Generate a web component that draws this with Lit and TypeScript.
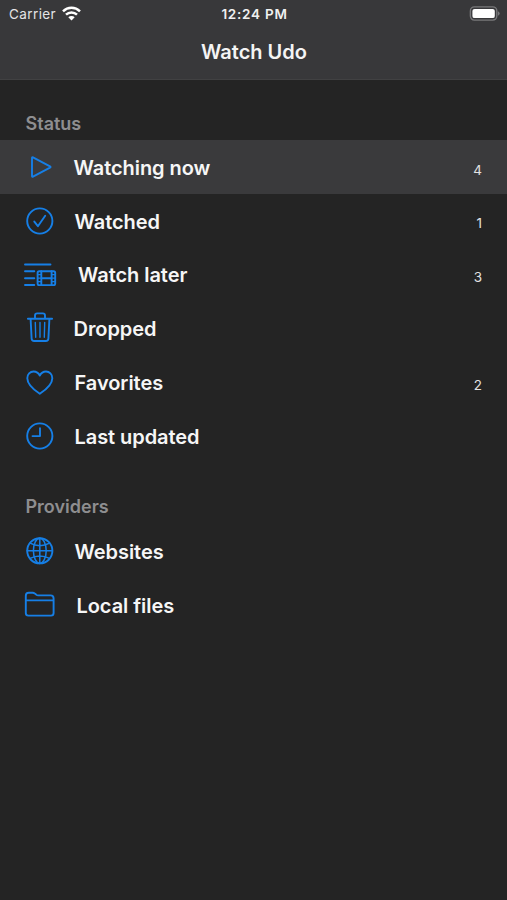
import { LitElement, html, svg, css, TemplateResult } from "lit";
import { customElement, property } from "lit/decorators.js";

const icons: Record<string, TemplateResult> = {
  play: svg`<path d="M10 8.9v18.2q0 1.1 1 .6L28 18.7q1.2-.7 0-1.4L11 8.3q-1-.5-1 .6z"/>`,
  check: svg`<circle cx="17.8" cy="18" r="12.6"/><path d="M12.3 18.6l3.6 4.6 7.3-10.4"/>`,
  later: svg`<path d="M3 7.5h25.5M3 14.3h9.3M3 21.3h9.3M3 28h9.3"/>
    <rect x="15.6" y="14.3" width="17.6" height="13.8" rx="1.6"/>
    <path d="M19.3 14.3v13.8M29.6 14.3v13.8M19.3 21.2h10.3"/>
    <path stroke-width="1.2" d="M15.6 17.7h3.7M15.6 21.2h3.7M15.6 24.7h3.7M29.6 17.7h3.6M29.6 21.2h3.6M29.6 24.7h3.6"/>`,
  trash: svg`<path d="M5.9 8.7h24.2M13 8.7V5.6q0-2.2 2.2-2.2h5.6q2.2 0 2.2 2.2v3.1M8.6 8.7l1 19.8q.1 2.5 2.6 2.5h11.600q2.5 0 2.600-2.500l1-19.800"/>
    <path stroke-width="1.400" d="M13.300 12.500l.4 14.800M18 12.500v14.800M22.700 12.500l-.4 14.800"/>`,
  heart: svg`<path d="M17.8 29.8C11.8 25.8 5.3 20.6 5.3 14.2c0-4 2.8-6.7 6.3-6.700 2.900 0 5 1.600 6.200 4.100 1.200-2.500 3.300-4.100 6.200-4.100 3.500 0 6.300 2.700 6.300 6.700 0 6.400-6.500 11.600-12.500 15.600z"/>`,
  clock: svg`<circle cx="17.8" cy="18" r="12.6"/><path d="M18 10.2v7.9h-7.5"/>`,
  globe: svg`<circle cx="17.8" cy="17.8" r="12.6"/>
    <g stroke-width="1.5"><ellipse cx="17.8" cy="17.8" rx="6.4" ry="12.6"/>
    <path d="M17.8 5.2v25.2M5.2 17.8h25.2M8 10.2q9.8 5 19.6 0M8 25.4q9.8-5 19.6 0"/></g>`,
  folder: svg`<path d="M3.8 26V8.7q0-2.9 2.9-2.9h4q1.2 0 2.1.8l1.3 1q.9.8 2.1.8h12.4q3 0 3 3V26q0 2.6-2.6 2.6H6.4Q3.8 28.6 3.8 26zM3.8 13.4h27.8"/>`,
};

@customElement("status-bar")
class StatusBar extends LitElement {
  static styles = css`
    :host {
      display: grid;
      grid-template-columns: 1fr auto 1fr;
      align-items: center;
      height: 27px;
      padding: 0 7px 0 9px;
      font-size: 13.5px;
      color: #e4e4e5;
    }
    .carrier { display: flex; align-items: center; gap: 6px; letter-spacing: 0.4px; }
    .time { font-weight: 600; letter-spacing: 0.75px; color: #f0f0f0; }
    .battery { justify-self: end; }
    svg { display: block; }
  `;
  render() {
    return html`
      <div class="carrier">
        <span>Carrier</span>
        <svg width="19" height="15" viewBox="0 0 19 15">
          <g fill="none" stroke="#fff" stroke-width="2.5">
            <path d="M1 5.3a12.2 12.2 0 0 1 17 0M4 8.7a7.9 7.9 0 0 1 11 0"/>
          </g>
          <path fill="#fff" d="M9.5 14.4L6.3 11.2a4.6 4.6 0 0 1 6.4 0z"/>
        </svg>
      </div>
      <span class="time">12:24 PM</span>
      <svg class="battery" width="31" height="15" viewBox="0 0 31 15">
        <rect x="1.4" y="0.9" width="26.4" height="13.2" rx="4" fill="none" stroke="#78787a" stroke-width="1.4"/>
        <rect x="3.4" y="2.9" width="22.4" height="9.2" rx="2.2" fill="#fff"/>
        <path d="M29 5.3q1.7.7 1.7 2.2T29 9.7z" fill="#78787a"/>
      </svg>
    `;
  }
}

@customElement("menu-row")
class MenuRow extends LitElement {
  @property() icon = "";
  @property() label = "";
  @property() count = "";
  @property({ type: Boolean, reflect: true }) selected = false;

  static styles = css`
    :host {
      display: flex;
      align-items: center;
      height: 53.75px;
      padding: 0 25px 0 22px;
      color: #f6f6f6;
    }
    :host([selected]) { background: #3a3a3c; }
    .icon {
      flex: none;
      width: 36px;
      height: 36px;
      margin-right: 15.5px;
      fill: none;
      stroke: #167fe6;
      stroke-width: 1.9;
      stroke-linecap: round;
      stroke-linejoin: round;
    }
    .label {
      flex: 1;
      padding-top: 1.5px;
      font-size: 20px;
      font-weight: 600;
      letter-spacing: -0.06px;
      white-space: nowrap;
    }
    .check, .heart, .clock, .globe { margin-right: 16.5px; }
    .folder { margin-right: 18.5px; }
    .later { margin-right: 20px; }
    .count { font-size: 13.5px; padding-top: 5px; color: #e2e2e3; }
  `;
  render() {
    return html`
      <svg class="icon ${this.icon}" viewBox="0 0 36 36">${icons[this.icon]}</svg>
      <span class="label">${this.label}</span>
      <span class="count">${this.count}</span>
    `;
  }
}

@customElement("app-root")
class AppRoot extends LitElement {
  static styles = css`
    :host {
      display: block;
      height: 900px;
      overflow: hidden;
      background: #242424;
      font-family: Inter, "Liberation Sans", sans-serif;
    }
    .top { box-sizing: border-box; height: 80px; background: #38383a; border-bottom: 1px solid #414142; }
    h1 {
      margin: 0;
      height: 51px;
      padding-left: 1px;
      line-height: 51px;
      text-align: center;
      font-size: 20px;
      font-weight: 600;
      color: #f4f4f4;
    }
    h2 {
      box-sizing: border-box;
      margin: 0;
      height: 60.3px;
      padding: 32px 0 0 25.5px;
      line-height: 24px;
      font-size: 18px;
      font-weight: 600;
      color: #8e8e90;
    }
    .providers { height: 61.4px; padding-top: 32.5px; }
  `;
  render() {
    return html`
      <header class="top">
        <status-bar></status-bar>
        <h1>Watch Udo</h1>
      </header>
      <main>
        <h2>Status</h2>
        <menu-row icon="play" label="Watching now" count="4" selected></menu-row>
        <menu-row icon="check" label="Watched" count="1"></menu-row>
        <menu-row icon="later" label="Watch later" count="3"></menu-row>
        <menu-row icon="trash" label="Dropped"></menu-row>
        <menu-row icon="heart" label="Favorites" count="2"></menu-row>
        <menu-row icon="clock" label="Last updated"></menu-row>
        <h2 class="providers">Providers</h2>
        <menu-row icon="globe" label="Websites"></menu-row>
        <menu-row icon="folder" label="Local files"></menu-row>
      </main>
    `;
  }
}
